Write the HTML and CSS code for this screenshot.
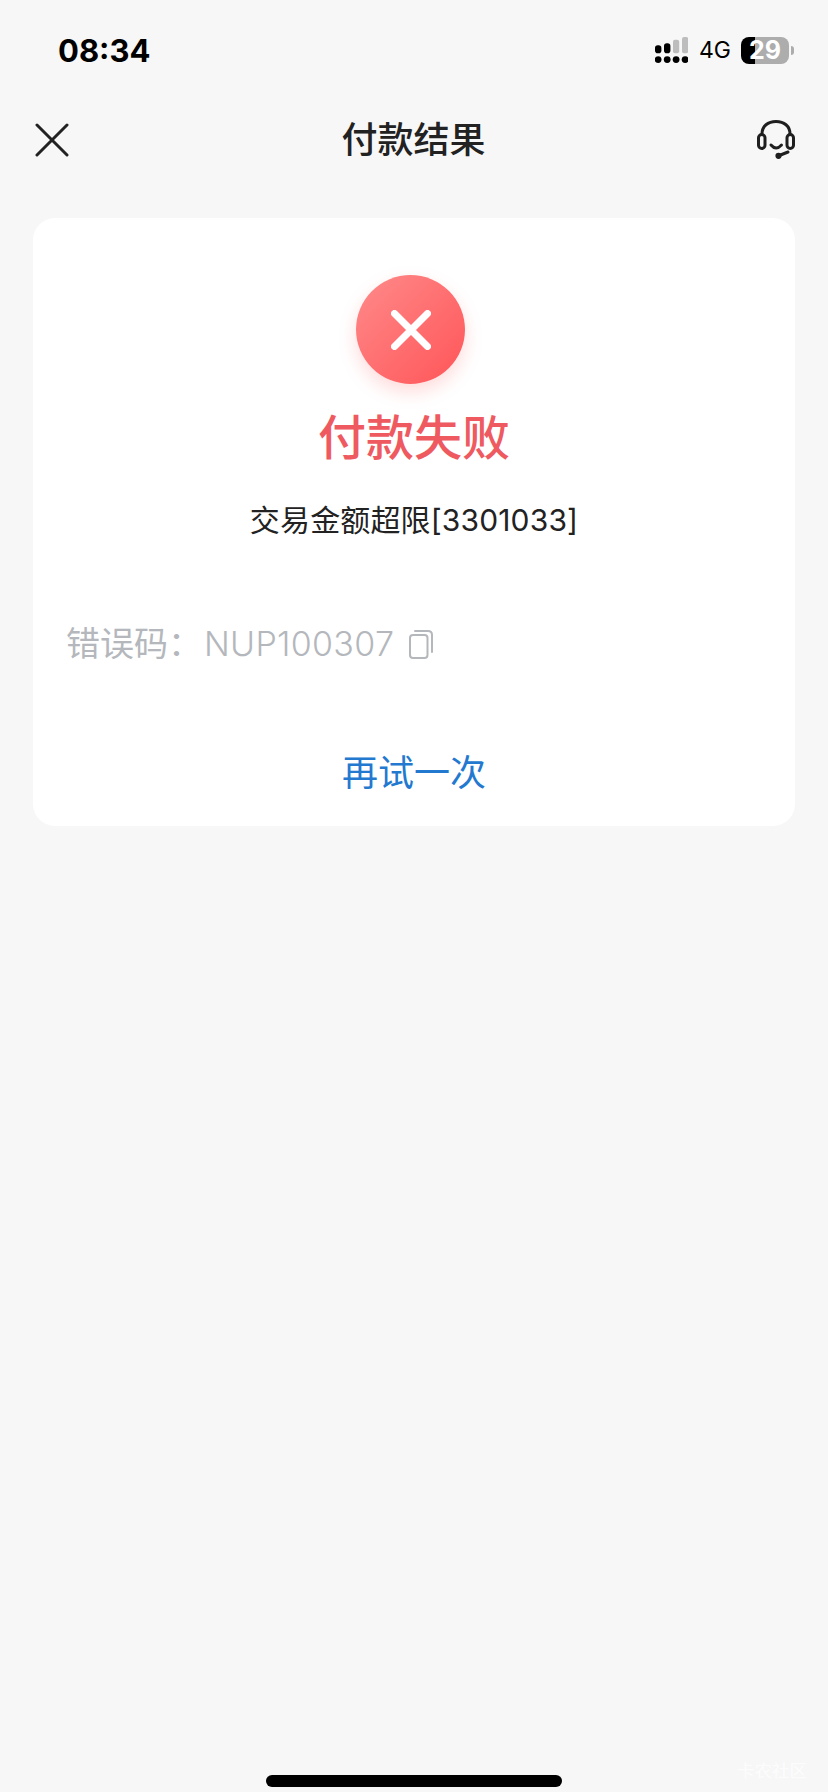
FILE: index.html
```html
<!DOCTYPE html>
<html lang="zh-CN">

<head>
    <meta charset="UTF-8">
    <meta name="viewport" content="width=device-width, initial-scale=1.0">
    <title>付款结果</title>
    <link rel="stylesheet" href="styles.css">
</head>

<body>
    <div class="page">
        <!-- Status bar -->
        <div class="status-bar">
            <span class="time">08:34</span>
            <div class="status-icons">
                <svg class="signal" width="33" height="26" viewBox="0 0 33 26">
                    <rect x="0" y="8.2" width="6.4" height="8" rx="2.8" fill="#000" />
                    <rect x="9" y="6.2" width="6.4" height="10" rx="2.8" fill="#000" />
                    <rect x="18" y="2.7" width="6.2" height="13.5" rx="2" fill="#bdbdbd" />
                    <rect x="27" y="0" width="6.2" height="16.2" rx="2" fill="#bdbdbd" />
                    <circle cx="3.1" cy="22.6" r="3.4" fill="#000" />
                    <circle cx="12.2" cy="22.6" r="3.4" fill="#000" />
                    <circle cx="21.1" cy="22.6" r="3.4" fill="#000" />
                    <circle cx="30.1" cy="22.6" r="3.4" fill="#000" />
                </svg>
                <span class="network">4G</span>
                <div class="battery">
                    <span class="battery-level">29</span>
                    <span class="battery-nub"></span>
                </div>
            </div>
        </div>

        <!-- Header -->
        <div class="nav-bar">
            <svg class="nav-close" width="34" height="34" viewBox="0 0 34 34">
                <path d="M2 2 L32 32 M32 2 L2 32" stroke="#222" stroke-width="3" stroke-linecap="round" fill="none" />
            </svg>
            <h1 class="nav-title">付款结果</h1>
            <svg class="nav-service" width="38" height="39" viewBox="0 0 38 39" fill="none" stroke="#1f1f1f"
                stroke-width="3" stroke-linecap="round">
                <path d="M5 14 C5 6 11 1.5 19 1.5 S33 6 33 14" />
                <rect x="1.5" y="14.5" width="6.5" height="14" rx="3.25" />
                <rect x="30" y="14.5" width="6.5" height="14" rx="3.25" />
                <path d="M14 25 Q19 31 24.5 25" />
                <path d="M21 36 L31 32" />
                <circle cx="21.5" cy="35.8" r="1.6" fill="#1f1f1f" />
            </svg>
        </div>

        <!-- Result card -->
        <div class="result-card">
            <div class="fail-icon">
                <svg width="40" height="40" viewBox="0 0 40 40">
                    <path d="M3.5 3.5 L36.5 36.5 M36.5 3.5 L3.5 36.5" stroke="#fff" stroke-width="7" stroke-linecap="round" fill="none" />
                </svg>
            </div>
            <div class="fail-title">付款失败</div>
            <div class="fail-reason">交易金额超限[3301033]</div>
            <div class="error-code">
                <span>错误码：</span><span class="error-number">NUP100307</span>
                <svg class="copy-icon" width="24" height="29" viewBox="0 0 24 29" fill="none" stroke="#b4b7bc"
                    stroke-width="2">
                    <rect x="1" y="5" width="17.5" height="23" rx="3" />
                    <path d="M6 1 H19 Q23 1 23 5 V22" stroke-linecap="round" />
                </svg>
            </div>
            <div class="retry">再试一次</div>
        </div>

        <div class="home-bar"></div>
        <div class="watermark">卡农社区</div>
    </div>
</body>

</html>
```

FILE: styles.css
```css
body {
    margin: 0;
    background-color: #f7f7f7;
    font-family: 'Inter', 'Noto Sans CJK SC', sans-serif;
}

.page {
    position: relative;
    height: 1792px;
    display: flex;
    flex-direction: column;
    overflow: hidden;
}

.status-bar {
    display: flex;
    justify-content: space-between;
    align-items: center;
    height: 36px;
    padding: 32px 34px 0 58px;
}

.time {
    font-family: 'Inter', sans-serif;
    font-size: 31px;
    font-weight: 700;
    color: #000;
}

.status-icons {
    display: flex;
    align-items: center;
}

.network {
    margin-left: 11px;
    font-family: 'Inter', sans-serif;
    font-size: 23px;
    color: #000;
}

.battery {
    display: flex;
    align-items: center;
    margin-left: 10px;
}

.battery-level {
    width: 48px;
    height: 27px;
    border-radius: 8px;
    background: linear-gradient(90deg, #000 14px, #adadad 14px);
    color: #fff;
    font-family: 'Inter', sans-serif;
    font-size: 25px;
    font-weight: 700;
    line-height: 27px;
    text-align: center;
}

.battery-nub {
    width: 3px;
    height: 9px;
    margin-left: 2px;
    border-radius: 0 3px 3px 0;
    background-color: #adadad;
}

.nav-bar {
    display: flex;
    justify-content: space-between;
    align-items: center;
    height: 50px;
    margin-top: 44px;
    padding: 0 33px 0 35px;
}

.nav-close {
    margin-top: 6px;
}

.nav-service {
    margin-top: 4px;
}

.nav-title {
    margin: 0 0 0 1px;
    font-size: 36px;
    font-weight: 500;
    color: #222;
}

.result-card {
    display: flex;
    flex-direction: column;
    align-items: center;
    height: 608px;
    margin: 56px 33px 0;
    background-color: #fff;
    border-radius: 22px;
}

.fail-icon {
    display: flex;
    justify-content: center;
    align-items: center;
    width: 109px;
    height: 109px;
    margin: 57px 7px 0 0;
    border-radius: 50%;
    background: linear-gradient(135deg, #ff8a8a, #ff5558);
    box-shadow: 0 8px 18px rgba(255, 90, 90, 0.22);
}

.fail-title {
    margin-top: 19px;
    font-size: 48px;
    font-weight: 500;
    line-height: 70px;
    color: #ee5a5f;
}

.fail-reason {
    margin-top: 25px;
    font-size: 30px;
    line-height: 44px;
    letter-spacing: 0.15px;
    color: #222;
}

.error-code {
    display: flex;
    align-items: center;
    align-self: flex-start;
    margin: 77px 0 0 33px;
    font-size: 34px;
    line-height: 50px;
    color: #b4b7bc;
}

.error-number {
    margin-left: 2px;
    font-weight: 300;
    letter-spacing: 0.3px;
}

.copy-icon {
    margin-left: 15px;
}

.retry {
    margin-top: 78px;
    font-size: 36px;
    line-height: 52px;
    color: #2378d0;
}

.home-bar {
    width: 296px;
    height: 12px;
    margin: auto auto 5px;
    border-radius: 6px;
    background-color: #000;
}

.watermark {
    position: absolute;
    right: 21px;
    bottom: 11px;
    font-size: 17.5px;
    line-height: 20px;
    color: rgba(255, 255, 255, 0.7);
}
```
